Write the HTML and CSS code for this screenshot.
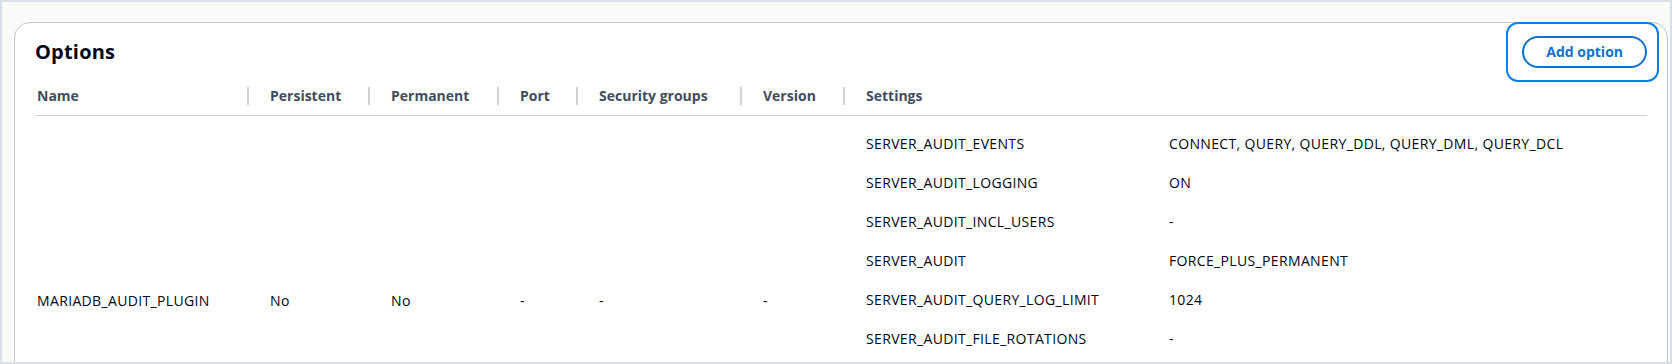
FILE: index.html
```html
<!DOCTYPE html>
<html lang="en">
<head>
    <meta charset="UTF-8">
    <meta name="viewport" content="width=device-width, initial-scale=1.0">
    <title>Options</title>
    <link rel="stylesheet" href="styles.css">
</head>
<body>
    <div class="frame">
        <section class="card">
            <header class="card-header">
                <h2>Options</h2>
                <button type="button" class="btn focused">Add option</button>
            </header>
            <table class="options">
                <colgroup>
                    <col class="col-name">
                    <col class="col-persistent">
                    <col class="col-permanent">
                    <col class="col-port">
                    <col class="col-groups">
                    <col class="col-version">
                    <col>
                </colgroup>
                <thead>
                    <tr>
                        <th>Name</th>
                        <th>Persistent</th>
                        <th>Permanent</th>
                        <th>Port</th>
                        <th>Security groups</th>
                        <th>Version</th>
                        <th>Settings</th>
                    </tr>
                </thead>
                <tbody>
                    <tr>
                        <td>MARIADB_AUDIT_PLUGIN</td>
                        <td>No</td>
                        <td>No</td>
                        <td>-</td>
                        <td>-</td>
                        <td>-</td>
                        <td class="settings-cell">
                            <table class="settings">
                                <tr><td class="key">SERVER_AUDIT_EVENTS</td><td>CONNECT, QUERY, QUERY_DDL, QUERY_DML, QUERY_DCL</td></tr>
                                <tr><td class="key">SERVER_AUDIT_LOGGING</td><td>ON</td></tr>
                                <tr><td class="key">SERVER_AUDIT_INCL_USERS</td><td>-</td></tr>
                                <tr><td class="key">SERVER_AUDIT</td><td>FORCE_PLUS_PERMANENT</td></tr>
                                <tr><td class="key">SERVER_AUDIT_QUERY_LOG_LIMIT</td><td>1024</td></tr>
                                <tr><td class="key">SERVER_AUDIT_FILE_ROTATIONS</td><td>-</td></tr>
                            </table>
                        </td>
                    </tr>
                </tbody>
            </table>
        </section>
    </div>
</body>
</html>
```

FILE: styles.css
```css
body {
    margin: 0;
    font-family: 'Open Sans', 'Liberation Sans', sans-serif;
    font-size: 14px;
    line-height: 20px;
    color: #000716;
}

.frame {
    height: 364px;
    box-sizing: border-box;
    border: 2px solid #d9dfe9;
    background-color: #fafafa;
    padding: 20px 2px 0 12px;
    overflow: hidden;
}

.card {
    background-color: #fff;
    border: 1px solid #c6c6cd;
    border-radius: 16px;
    padding: 13px 20px 20px 20px;
}

.card-header {
    display: flex;
    justify-content: space-between;
    align-items: center;
}

.card-header h2 {
    margin: 0;
    font-size: 20px;
    line-height: 24px;
    font-weight: 700;
    letter-spacing: 0.2px;
}

.btn {
    font-family: inherit;
    font-size: 14px;
    line-height: 20px;
    font-weight: 700;
    color: #0972d3;
    background-color: #fff;
    border: 2px solid #0972d3;
    border-radius: 20px;
    padding: 4px 22px;
    cursor: pointer;
}

.btn.focused {
    position: relative;
}

/* anel de foco em volta do botao */
.btn.focused::after {
    content: '';
    position: absolute;
    top: -16px;
    bottom: -16px;
    left: -18px;
    right: -14px;
    border: 2px solid #0a7ff0;
    border-radius: 12px;
}

.options {
    width: 100%;
    margin-top: 9px;
    border-collapse: collapse;
    table-layout: fixed;
}

.col-name { width: 213px; }
.col-persistent { width: 121px; }
.col-permanent { width: 129px; }
.col-port { width: 79px; }
.col-groups { width: 164px; }
.col-version { width: 103px; }

.options th {
    position: relative;
    text-align: left;
    font-weight: 700;
    color: #414d5c;
    padding: 9px 0 9px 22px;
    border-bottom: 1px solid #d1d1d6;
    white-space: nowrap;
}

.options th:not(:first-child)::before {
    content: '';
    position: absolute;
    left: -1px;
    top: 10px;
    width: 2px;
    height: 18px;
    background-color: #d1d1d6;
}

.options th:first-child,
.options td:first-child {
    padding-left: 2px;
}

.options td {
    padding: 0 0 0 22px;
    vertical-align: middle;
    white-space: nowrap;
    letter-spacing: 0.35px;
}

.options td.settings-cell {
    padding: 8px 0 128px 22px;
}

.settings {
    width: 100%;
    border-collapse: collapse;
}

.settings td {
    padding: 10px 0 9px 0;
}

.settings .key {
    width: 303px;
}

.options .settings td:first-child {
    padding-left: 0;
}
```
